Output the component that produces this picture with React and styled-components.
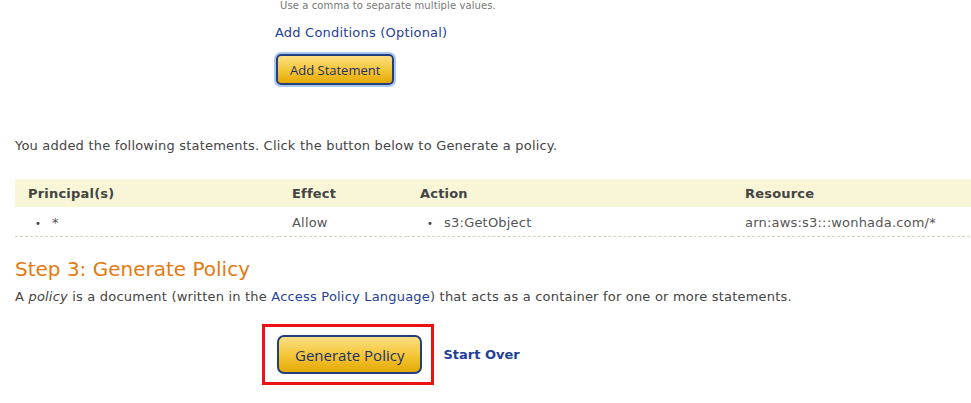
import styled, { createGlobalStyle } from "styled-components";

const GlobalStyle = createGlobalStyle`
  body {
    margin: 0;
    background: #fff;
    font-family: "DejaVu Sans", Verdana, sans-serif;
    color: #444;
  }
`;

const Page = styled.div`
  width: 971px;
  height: 403px;
  overflow: hidden;
`;

const StatementForm = styled.div`
  padding-left: 275px;
  display: flex;
  flex-direction: column;
  align-items: flex-start;
`;

const Hint = styled.div`
  font-size: 10px;
  color: #777;
  padding-left: 5px;
  line-height: 12px;
  letter-spacing: 0.1px;
`;

const Link = styled.a`
  color: #1e3f9a;
  text-decoration: none;
  cursor: pointer;
  font-weight: ${(p) => (p.$bold ? "bold" : "normal")};
  font-size: ${(p) => p.$size || "inherit"};
`;

const CondLink = styled(Link)`
  font-size: 13px;
  margin-top: 13px;
  line-height: 16px;
  letter-spacing: 0.2px;
`;

const GoldButton = styled.button`
  font-family: "Open Sans", "Noto Sans", sans-serif;
  color: #1c2f6b;
  font-size: ${(p) => (p.$big ? "15px" : "13px")};
  height: ${(p) => (p.$big ? "39px" : "31px")};
  padding: 0 ${(p) => (p.$big ? "16px" : "12px")};
  border: 2px solid #233f80;
  border-radius: ${(p) => (p.$big ? "7px" : "5px")};
  background: linear-gradient(#fbdf82 0%, #f4c534 55%, #e3a806 100%);
  box-shadow: ${(p) => (p.$focus ? "0 0 0 2px #a9c8f0" : "none")};
  cursor: pointer;
`;

const AddButton = styled(GoldButton)`
  margin-top: 13px;
  margin-left: 1px;
`;

const Section = styled.div`
  padding-left: 15px;
  font-size: 13px;
  letter-spacing: 0.2px;
`;

const Intro = styled.p`
  margin: 53px 0 0;
  line-height: 16px;
`;

const Table = styled.table`
  margin-top: 25px;
  width: 980px;
  table-layout: fixed;
  border-collapse: collapse;
`;

const Th = styled.th`
  background: #f9f5d7;
  text-align: left;
  font-weight: bold;
  color: #444;
  height: 28px;
  padding: 0 0 0 13px;
  border-bottom: 1px solid #ffffff;
  width: ${(p) => p.$w || "auto"};
`;

const Td = styled.td`
  height: 28px;
  padding: 0 0 0 ${(p) => p.$pad || "13px"};
  border-bottom: 1px dashed #d8d6b0;
  color: #555;
  white-space: nowrap;
`;

const Bullet = styled.span`
  &::before {
    content: "•";
    margin-right: 11px;
    font-size: 10px;
    color: #444;
  }
`;

const Heading = styled.h2`
  color: #e47911;
  font-weight: normal;
  font-size: 20px;
  letter-spacing: 0;
  margin: 20px 0 0;
  line-height: 24px;
`;

const Desc = styled.p`
  margin: 8px 0 0;
  line-height: 16px;
`;

const Actions = styled.div`
  display: flex;
  align-items: center;
  gap: 9px;
  margin-top: 19px;
  padding-left: 262px;
`;

const Highlight = styled.div`
  border: 3px solid #ee1111;
  padding: 8px 9px 8px 12px;
  display: flex;
`;

export default function App() {
  return (
    <Page>
      <GlobalStyle />
      <StatementForm>
        <Hint>Use a comma to separate multiple values.</Hint>
        <CondLink>Add Conditions (Optional)</CondLink>
        <AddButton $focus>Add Statement</AddButton>
      </StatementForm>
      <Section>
        <Intro>
          You added the following statements. Click the button below to Generate a policy.
        </Intro>
        <Table>
          <thead>
            <tr>
              <Th $w="251px">Principal(s)</Th>
              <Th $w="115px">Effect</Th>
              <Th $w="312px">Action</Th>
              <Th>Resource</Th>
            </tr>
          </thead>
          <tbody>
            <tr>
              <Td $pad="20px"><Bullet>*</Bullet></Td>
              <Td>Allow</Td>
              <Td $pad="20px"><Bullet>s3:GetObject</Bullet></Td>
              <Td>arn:aws:s3:::wonhada.com/*</Td>
            </tr>
          </tbody>
        </Table>
        <Heading>Step 3: Generate Policy</Heading>
        <Desc>
          A <i>policy</i> is a document (written in the <Link>Access Policy Language</Link>) that
          acts as a container for one or more statements.
        </Desc>
      </Section>
      <Actions>
        <Highlight>
          <GoldButton $big>Generate Policy</GoldButton>
        </Highlight>
        <Link $bold $size="13px">Start Over</Link>
      </Actions>
    </Page>
  );
}
